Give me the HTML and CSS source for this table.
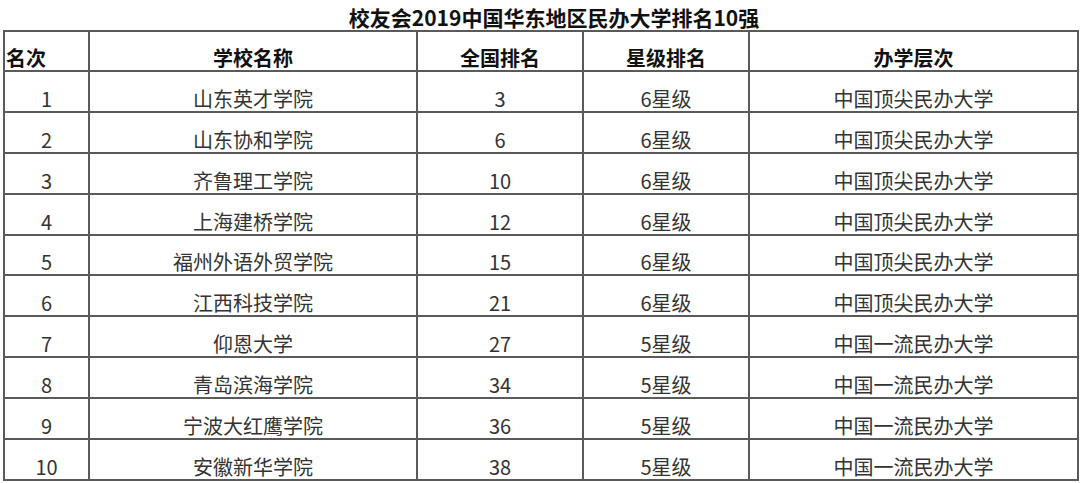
FILE: index.html
```html
<!DOCTYPE html>
<html lang="zh-CN">
<head>
<meta charset="utf-8">
<title>校友会2019中国华东地区民办大学排名10强</title>
<link rel="stylesheet" href="styles.css">
</head>
<body>
<div class="page">
  <h1 class="title">校友会2019中国华东地区民办大学排名10强</h1>
  <table class="rank">
    <colgroup>
      <col class="c-rank">
      <col class="c-name">
      <col class="c-nat">
      <col class="c-star">
      <col class="c-level">
    </colgroup>
    <thead>
      <tr>
        <th class="left">名次</th>
        <th>学校名称</th>
        <th>全国排名</th>
        <th>星级排名</th>
        <th>办学层次</th>
      </tr>
    </thead>
    <tbody>
      <tr><td>1</td><td>山东英才学院</td><td>3</td><td>6星级</td><td>中国顶尖民办大学</td></tr>
      <tr><td>2</td><td>山东协和学院</td><td>6</td><td>6星级</td><td>中国顶尖民办大学</td></tr>
      <tr><td>3</td><td>齐鲁理工学院</td><td>10</td><td>6星级</td><td>中国顶尖民办大学</td></tr>
      <tr><td>4</td><td>上海建桥学院</td><td>12</td><td>6星级</td><td>中国顶尖民办大学</td></tr>
      <tr><td>5</td><td>福州外语外贸学院</td><td>15</td><td>6星级</td><td>中国顶尖民办大学</td></tr>
      <tr><td>6</td><td>江西科技学院</td><td>21</td><td>6星级</td><td>中国顶尖民办大学</td></tr>
      <tr><td>7</td><td>仰恩大学</td><td>27</td><td>5星级</td><td>中国一流民办大学</td></tr>
      <tr><td>8</td><td>青岛滨海学院</td><td>34</td><td>5星级</td><td>中国一流民办大学</td></tr>
      <tr><td>9</td><td>宁波大红鹰学院</td><td>36</td><td>5星级</td><td>中国一流民办大学</td></tr>
      <tr><td>10</td><td>安徽新华学院</td><td>38</td><td>5星级</td><td>中国一流民办大学</td></tr>
    </tbody>
  </table>
</div>
</body>
</html>
```

FILE: styles.css
```css
html, body {
  margin: 0;
  padding: 0;
  background: #ffffff;
}

body {
  font-family: "Noto Sans CJK SC", "Noto Sans", sans-serif;
  color: #222222;
}

.page {
  width: 1080px;
  height: 483px;
  overflow: hidden;
}

.title {
  margin: 0;
  height: 30px;
  padding-left: 28px;
  font-size: 21px;
  font-weight: 700;
  line-height: 34px;
  text-align: center;
  color: #111111;
  white-space: nowrap;
}

.rank {
  margin-left: 3px;
  width: 1074px;
  border-collapse: collapse;
  table-layout: fixed;
}

.c-rank { width: 85px; }
.c-name { width: 328px; }
.c-nat { width: 166px; }
.c-star { width: 166px; }
.c-level { width: 329px; }

.rank th,
.rank td {
  border: 2px solid #5a5a5a;
  padding: 0;
  font-size: 20px;
  line-height: 24px;
  text-align: center;
  vertical-align: bottom;
  white-space: nowrap;
}

.rank th {
  height: 38px;
  font-weight: 700;
  color: #111111;
}

.rank td {
  height: 38.9px;
  font-weight: 400;
  color: #333333;
}

.rank th.left {
  text-align: left;
  padding-left: 1px;
}
```
